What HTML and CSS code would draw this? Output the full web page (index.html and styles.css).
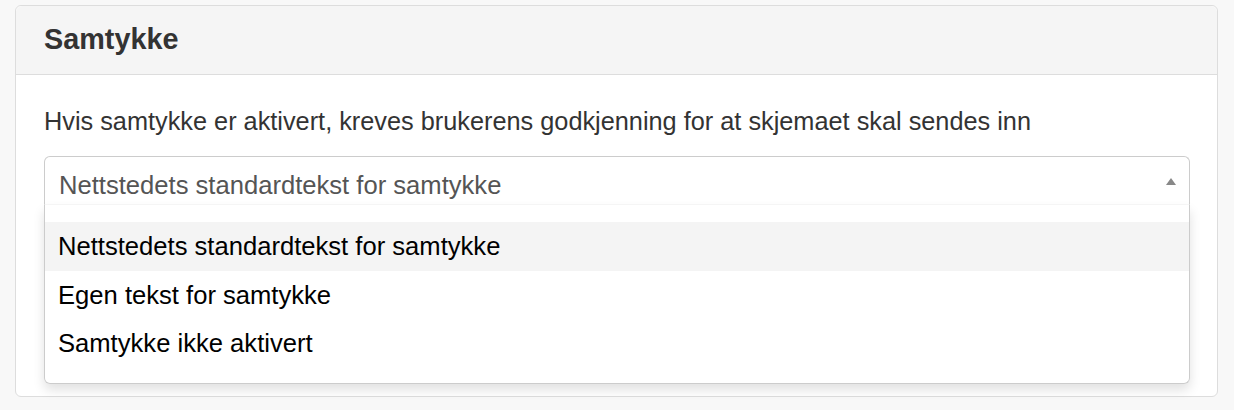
FILE: index.html
```html
<!DOCTYPE html>
<html lang="nb">
<head>
    <meta charset="UTF-8">
    <meta name="viewport" content="width=device-width, initial-scale=1.0">
    <title>Samtykke</title>
    <link rel="stylesheet" href="styles.css">
</head>
<body>
    <div class="panel">
        <div class="panel-head">
            <h3>Samtykke</h3>
        </div>
        <div class="panel-body">
            <p class="help">Hvis samtykke er aktivert, kreves brukerens godkjenning for at skjemaet skal sendes inn</p>
            <div class="select">
                <div class="select-value">
                    <span>Nettstedets standardtekst for samtykke</span>
                    <span class="arrow"></span>
                </div>
                <ul class="options">
                    <li class="active">Nettstedets standardtekst for samtykke</li>
                    <li>Egen tekst for samtykke</li>
                    <li>Samtykke ikke aktivert</li>
                </ul>
            </div>
        </div>
    </div>
</body>
</html>
```

FILE: styles.css
```css
body{
    margin: 0;
    padding: 5px 16px 15px 15px;
    background: #f8f8f8;
    font-family: "Liberation Sans", Arial, sans-serif;
    color: #333;
}
.panel{
    background: white;
    border: 1px solid #ddd;
    border-radius: 6px;
}
.panel-head{
    background: #f5f5f5;
    border-bottom: 1px solid #ddd;
    border-radius: 6px 6px 0 0;
    padding: 16px 28px 18px;
}
h3{
    margin: 0;
    font-size: 28.8px;
    line-height: 34px;
    font-weight: bold;
}
.panel-body{
    padding: 28px 27px 12px 28px;
}
.help{
    margin: 0 0 17px;
    font-size: 25.3px;
    line-height: 36px;
}
.select{
    font-size: 25.6px;
}
.select-value{
    display: flex;
    align-items: center;
    justify-content: space-between;
    height: 49px;
    box-sizing: border-box;
    padding: 8px 13px 0 14px;
    border: 1px solid #ccc;
    border-bottom: 1px solid #f8f8f8;
    border-radius: 6px 6px 0 0;
    color: #555;
    line-height: 36px;
}
.arrow{
    width: 0;
    height: 0;
    border-left: 5px solid transparent;
    border-right: 5px solid transparent;
    border-bottom: 7px solid #888;
    margin-top: -6px;
}
.options{
    list-style: none;
    margin: 0;
    padding: 17px 0 15px;
    border: 1px solid #ccc;
    border-top: 0;
    border-radius: 0 0 6px 6px;
    box-shadow: 0 6px 12px rgba(0,0,0,0.12);
    color: #000;
}
.options li{
    height: 48.5px;
    line-height: 48.5px;
    padding-left: 13px;
}
.options li.active{
    background: #f4f4f4;
}
```
